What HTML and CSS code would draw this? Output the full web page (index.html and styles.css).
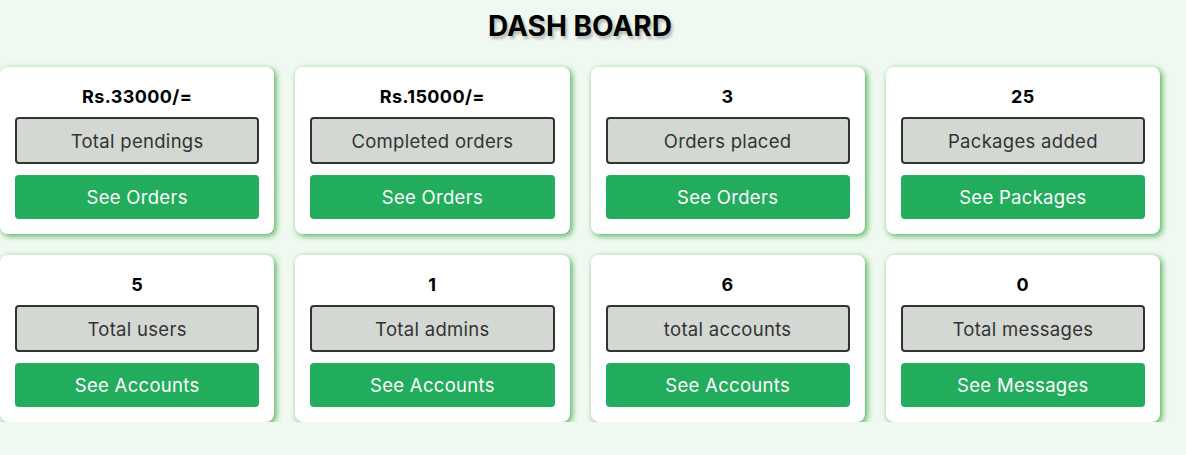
FILE: index.html
```html
<!DOCTYPE html>
<html>
<head>
<meta charset="utf-8">
<link rel="stylesheet" href="styles.css">
</head>
<body>
<div class="page">
  <h1 class="title">DASH BOARD</h1>
  <div class="grid">
    <div class="card"><div class="value">Rs.33000/=</div><div class="label">Total pendings</div><a class="btn">See Orders</a></div>
    <div class="card"><div class="value">Rs.15000/=</div><div class="label">Completed orders</div><a class="btn">See Orders</a></div>
    <div class="card"><div class="value">3</div><div class="label">Orders placed</div><a class="btn">See Orders</a></div>
    <div class="card"><div class="value">25</div><div class="label">Packages added</div><a class="btn">See Packages</a></div>
    <div class="card"><div class="value">5</div><div class="label">Total users</div><a class="btn">See Accounts</a></div>
    <div class="card"><div class="value">1</div><div class="label">Total admins</div><a class="btn">See Accounts</a></div>
    <div class="card"><div class="value">6</div><div class="label">total accounts</div><a class="btn">See Accounts</a></div>
    <div class="card"><div class="value">0</div><div class="label">Total messages</div><a class="btn">See Messages</a></div>
  </div>
</div>
</body>
</html>
```
FILE: styles.css
```css
* { box-sizing: border-box; }
body {
  margin: 0;
  background: #f0f9f1;
  font-family: Inter, "Liberation Sans", sans-serif;
}
.page { width: 1160px; }
.title {
  margin: 0;
  padding-top: 9px;
  height: 67px;
  text-align: center;
  font-size: 28px;
  line-height: 34px;
  font-weight: 700;
  color: #000;
  text-shadow: 2px 3px 3px rgba(0,0,0,0.25);
}
.grid {
  display: grid;
  grid-template-columns: repeat(4, 1fr);
  gap: 21px;
}
.card {
  background: #fff;
  border-radius: 8px;
  box-shadow: 2px 2px 6px #4caf50;
  padding: 15px 15px 15px;
  display: flex;
  flex-direction: column;
}
.value {
  text-align: center;
  font-size: 18px;
  font-weight: 700;
  letter-spacing: 0.4px;
  line-height: 25px;
  padding-top: 2px;
  margin-bottom: 8px;
  color: #000;
}
.label {
  height: 47px;
  border: 2px solid #333;
  border-radius: 4px;
  background: #d3d8d3;
  color: #333;
  font-size: 18.5px;
  letter-spacing: 0.3px;
  padding-top: 1px;
  display: flex;
  align-items: center;
  justify-content: center;
  margin-bottom: 11px;
}
.btn {
  height: 44px;
  border-radius: 4px;
  background: #22ad5c;
  color: #fff;
  font-size: 18.5px;
  letter-spacing: 0.3px;
  display: flex;
  align-items: center;
  justify-content: center;
}
```
